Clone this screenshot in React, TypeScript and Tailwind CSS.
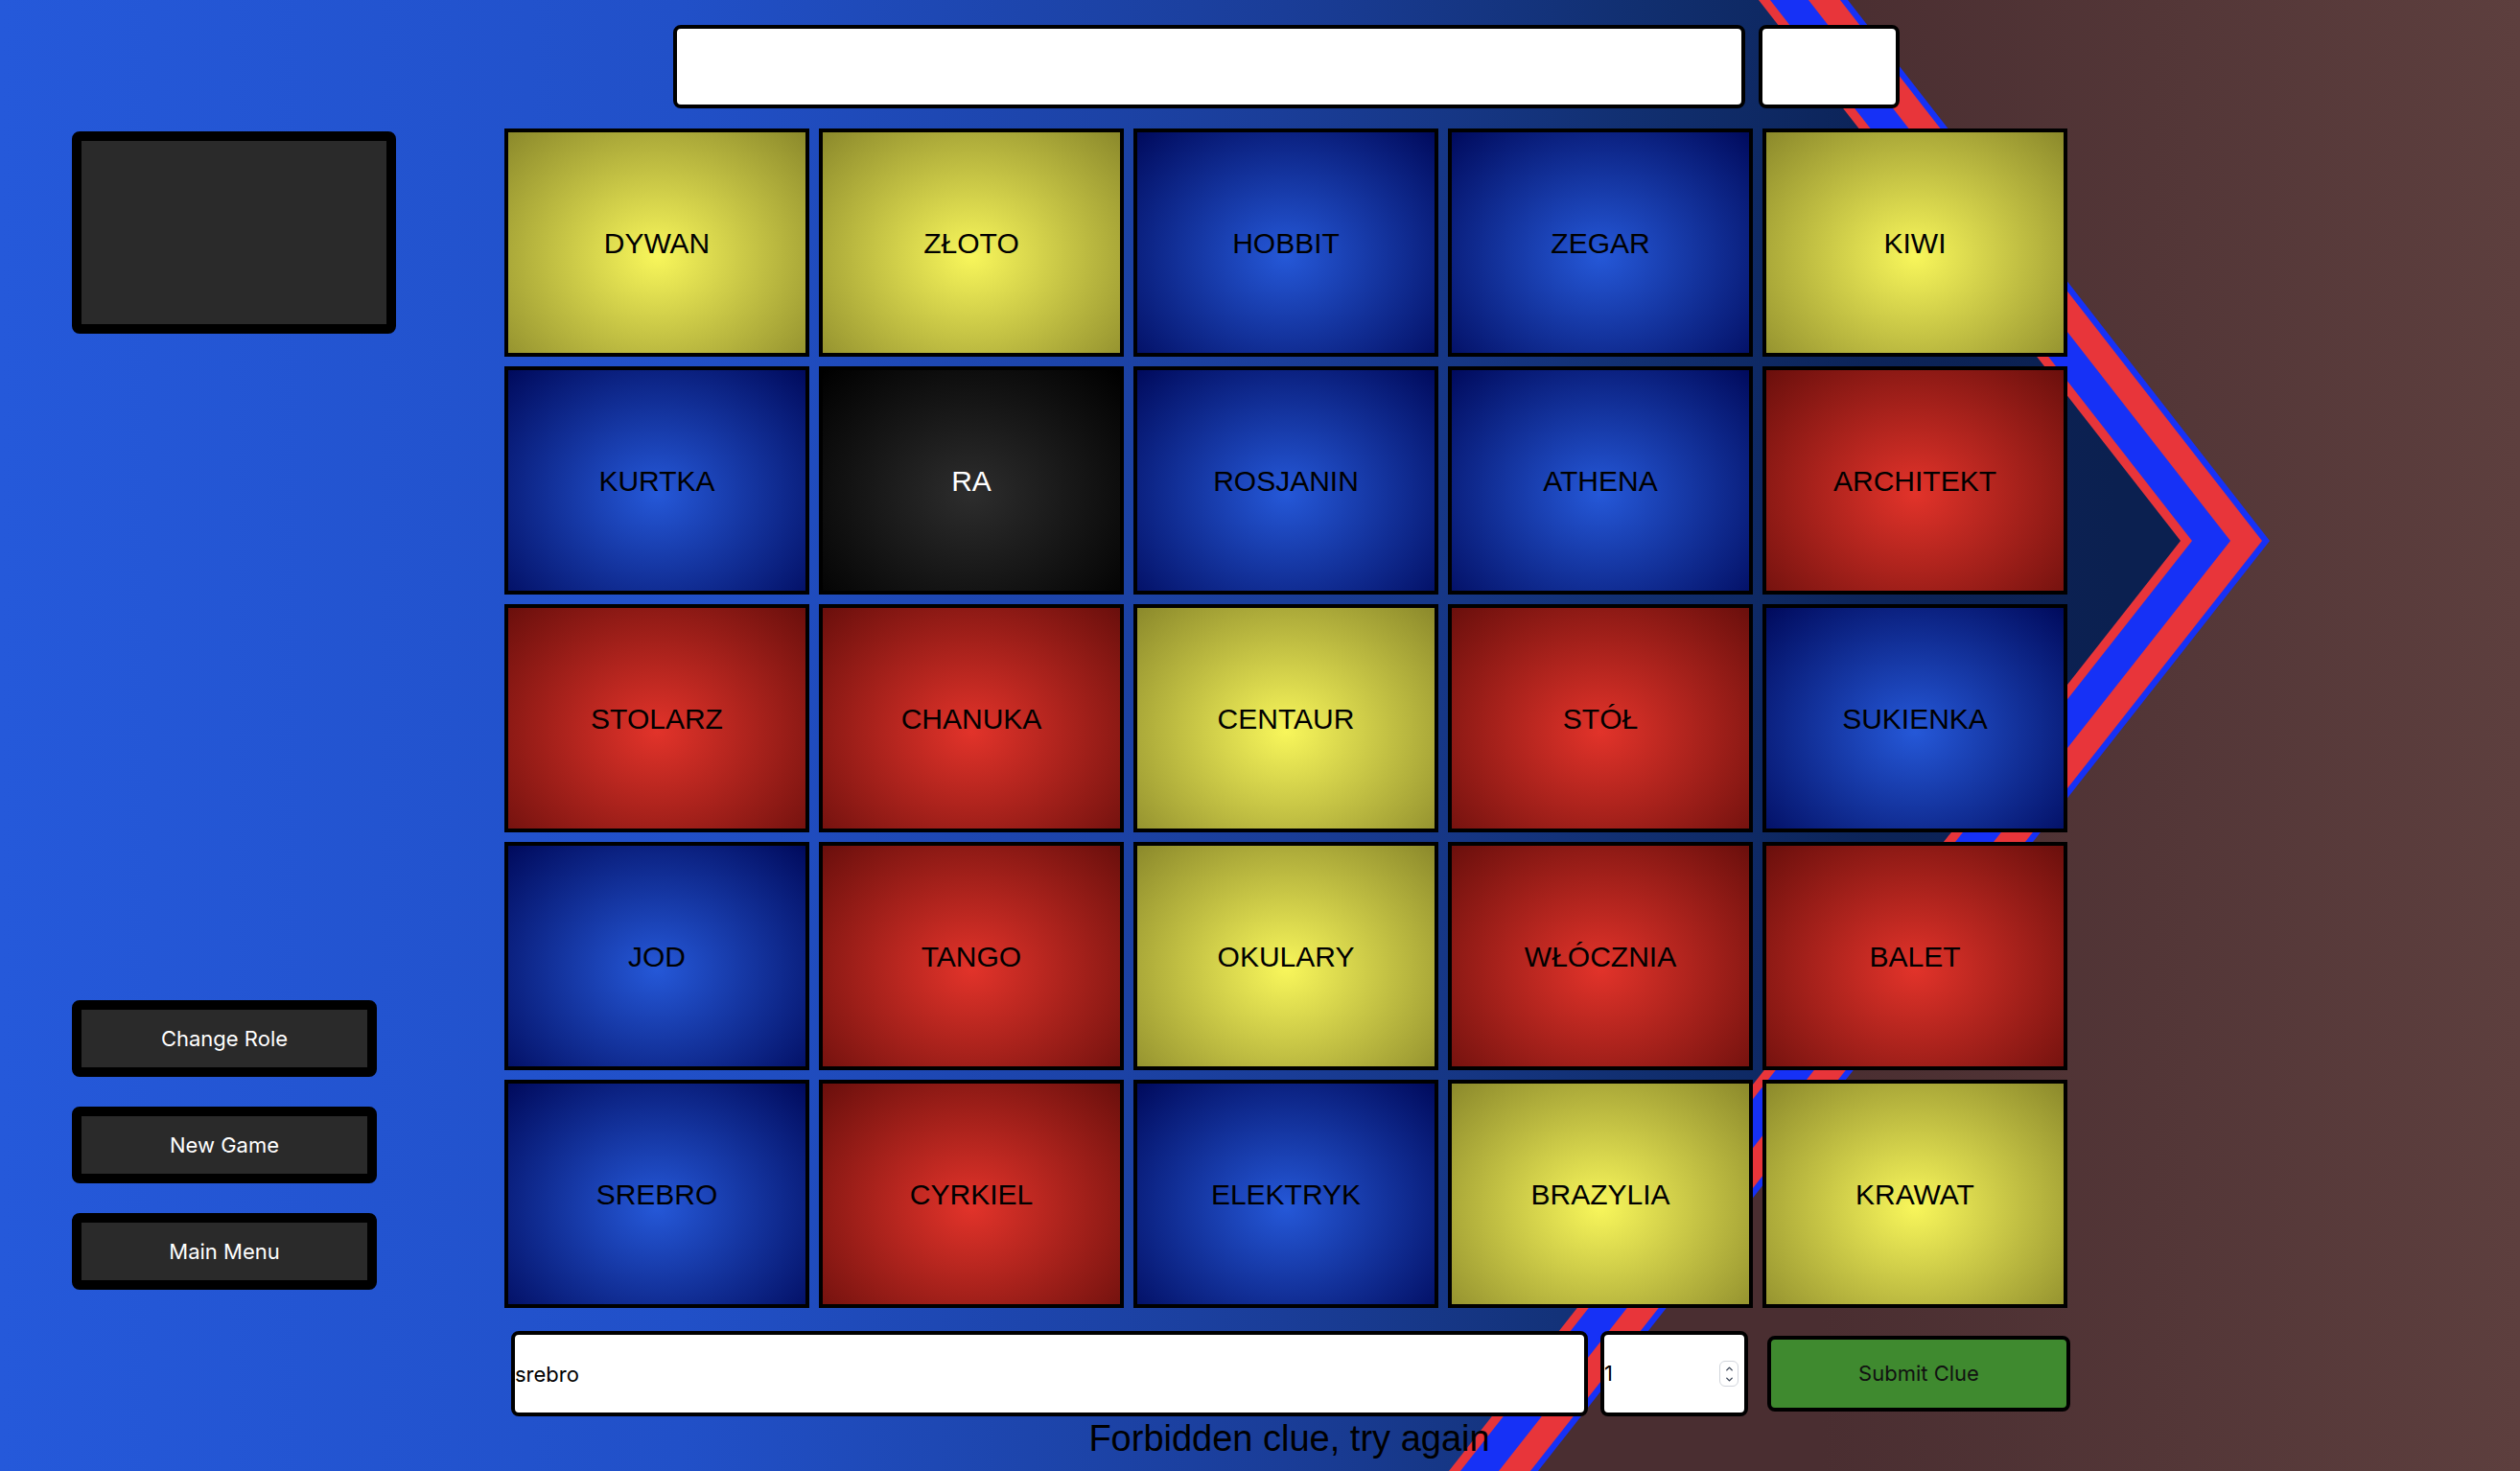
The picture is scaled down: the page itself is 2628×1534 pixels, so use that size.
import { ChevronUp, ChevronDown } from "lucide-react";

type Team = "yellow" | "blue" | "red" | "black";

const CARDS: { word: string; team: Team }[] = [
  { word: "DYWAN", team: "yellow" },
  { word: "ZŁOTO", team: "yellow" },
  { word: "HOBBIT", team: "blue" },
  { word: "ZEGAR", team: "blue" },
  { word: "KIWI", team: "yellow" },
  { word: "KURTKA", team: "blue" },
  { word: "RA", team: "black" },
  { word: "ROSJANIN", team: "blue" },
  { word: "ATHENA", team: "blue" },
  { word: "ARCHITEKT", team: "red" },
  { word: "STOLARZ", team: "red" },
  { word: "CHANUKA", team: "red" },
  { word: "CENTAUR", team: "yellow" },
  { word: "STÓŁ", team: "red" },
  { word: "SUKIENKA", team: "blue" },
  { word: "JOD", team: "blue" },
  { word: "TANGO", team: "red" },
  { word: "OKULARY", team: "yellow" },
  { word: "WŁÓCZNIA", team: "red" },
  { word: "BALET", team: "red" },
  { word: "SREBRO", team: "blue" },
  { word: "CYRKIEL", team: "red" },
  { word: "ELEKTRYK", team: "blue" },
  { word: "BRAZYLIA", team: "yellow" },
  { word: "KRAWAT", team: "yellow" },
];

// radial fill per card colour, bright spot slightly below centre
const CARD_STYLE: Record<Team, string> = {
  yellow: "bg-[radial-gradient(ellipse_at_50%_56%,#f8f65b_0%,#8b892b_100%)] text-black",
  blue: "bg-[radial-gradient(ellipse_at_50%_56%,#2558d8_0%,#000a5c_100%)] text-black",
  red: "bg-[radial-gradient(ellipse_at_50%_56%,#e2332a_0%,#6a0f0c_100%)] text-black",
  black: "bg-[radial-gradient(ellipse_at_50%_56%,#2d2d2d_0%,#000000_100%)] text-white",
};

// chevron band behind the board: region left of the edge, shifted in by o px
const arm = (o: number) =>
  `0,0 ${1927 - o},0 ${2367 - o},564 ${1604 - o},1534 0,1534`;

function Backdrop() {
  return (
    <svg
      className="absolute inset-0 h-full w-full"
      viewBox="0 0 2628 1534"
      preserveAspectRatio="none"
    >
      <defs>
        <linearGradient id="brown" x1="1900" y1="0" x2="2628" y2="0" gradientUnits="userSpaceOnUse">
          <stop offset="0" stopColor="#4a2e31" />
          <stop offset="1" stopColor="#5d3f3e" />
        </linearGradient>
        <linearGradient id="sea" x1="0" y1="0" x2="2628" y2="0" gradientUnits="userSpaceOnUse">
          <stop offset="0" stopColor="#2559da" />
          <stop offset="0.27" stopColor="#2150c8" />
          <stop offset="0.51" stopColor="#1a3d98" />
          <stop offset="0.65" stopColor="#112f70" />
          <stop offset="0.74" stopColor="#0c2459" />
          <stop offset="0.84" stopColor="#0b2050" />
          <stop offset="1" stopColor="#0b2050" />
        </linearGradient>
      </defs>
      <rect width="2628" height="1534" fill="url(#brown)" />
      <polygon points={arm(0)} fill="#1631f6" />
      <polygon points={arm(8)} fill="#e8353a" />
      <polygon points={arm(41)} fill="#1631f6" />
      <polygon points={arm(81)} fill="#e8353a" />
      <polygon points={arm(93)} fill="url(#sea)" />
    </svg>
  );
}

function SideButton({ label }: { label: string }) {
  return (
    <button className="h-[80px] w-[318px] rounded-[8px] border-[10px] border-black bg-[#2a2a2a] font-['Inter',sans-serif] text-[22px] text-white">
      {label}
    </button>
  );
}

export default function App() {
  return (
    <div className="relative h-screen w-full overflow-hidden">
      <Backdrop />

      <div className="relative flex">
        {/* Left column */}
        <aside className="ml-[75px] mt-[137px] flex w-[338px] flex-col">
          <div className="h-[211px] w-[338px] rounded-[8px] border-[10px] border-black bg-[#2a2a2a]" />
          <div className="mt-[695px] flex flex-col gap-[31px]">
            <SideButton label="Change Role" />
            <SideButton label="New Game" />
            <SideButton label="Main Menu" />
          </div>
        </aside>

        {/* Board */}
        <main className="ml-[113px] flex w-[1630px] flex-col pt-[26px]">
          <div className="flex justify-center gap-[14px]">
            <div className="h-[87px] w-[1118px] rounded-[8px] border-4 border-black bg-white" />
            <div className="h-[87px] w-[147px] rounded-[8px] border-4 border-black bg-white" />
          </div>

          <div className="mt-[21px] grid grid-cols-5 gap-[10px]">
            {CARDS.map((card) => (
              <div
                key={card.word}
                className={`flex h-[238px] items-center justify-center border-4 border-black font-['Liberation_Sans',Arial,sans-serif] text-[30px] ${CARD_STYLE[card.team]}`}
              >
                {card.word}
              </div>
            ))}
          </div>

          <div className="ml-[7px] mt-[24px] flex items-center font-['Inter',sans-serif] text-[22px]">
            <input
              defaultValue="srebro"
              className="h-[89px] w-[1123px] shrink-0 rounded-[8px] border-4 border-black bg-white text-black outline-none"
            />
            <div className="ml-[13px] flex h-[89px] w-[154px] shrink-0 items-center rounded-[8px] border-4 border-black bg-white pr-[6px]">
              <input defaultValue="1" className="w-full min-w-0 flex-1 bg-transparent text-black outline-none" />
              <div className="flex h-[27px] w-[20px] flex-col items-center justify-center rounded-[6px] border border-gray-300 bg-white text-gray-700">
                <ChevronUp size={11} strokeWidth={3} />
                <ChevronDown size={11} strokeWidth={3} />
              </div>
            </div>
            <button className="ml-[20px] h-[79px] w-[316px] shrink-0 rounded-[8px] border-4 border-black bg-[#3f8a2f] text-[#111]">
              Submit Clue
            </button>
          </div>

          <p className="mt-[4px] pl-[7px] text-center font-['Liberation_Sans',Arial,sans-serif] text-[38px] leading-none text-black">
            Forbidden clue, try again
          </p>
        </main>
      </div>
    </div>
  );
}
